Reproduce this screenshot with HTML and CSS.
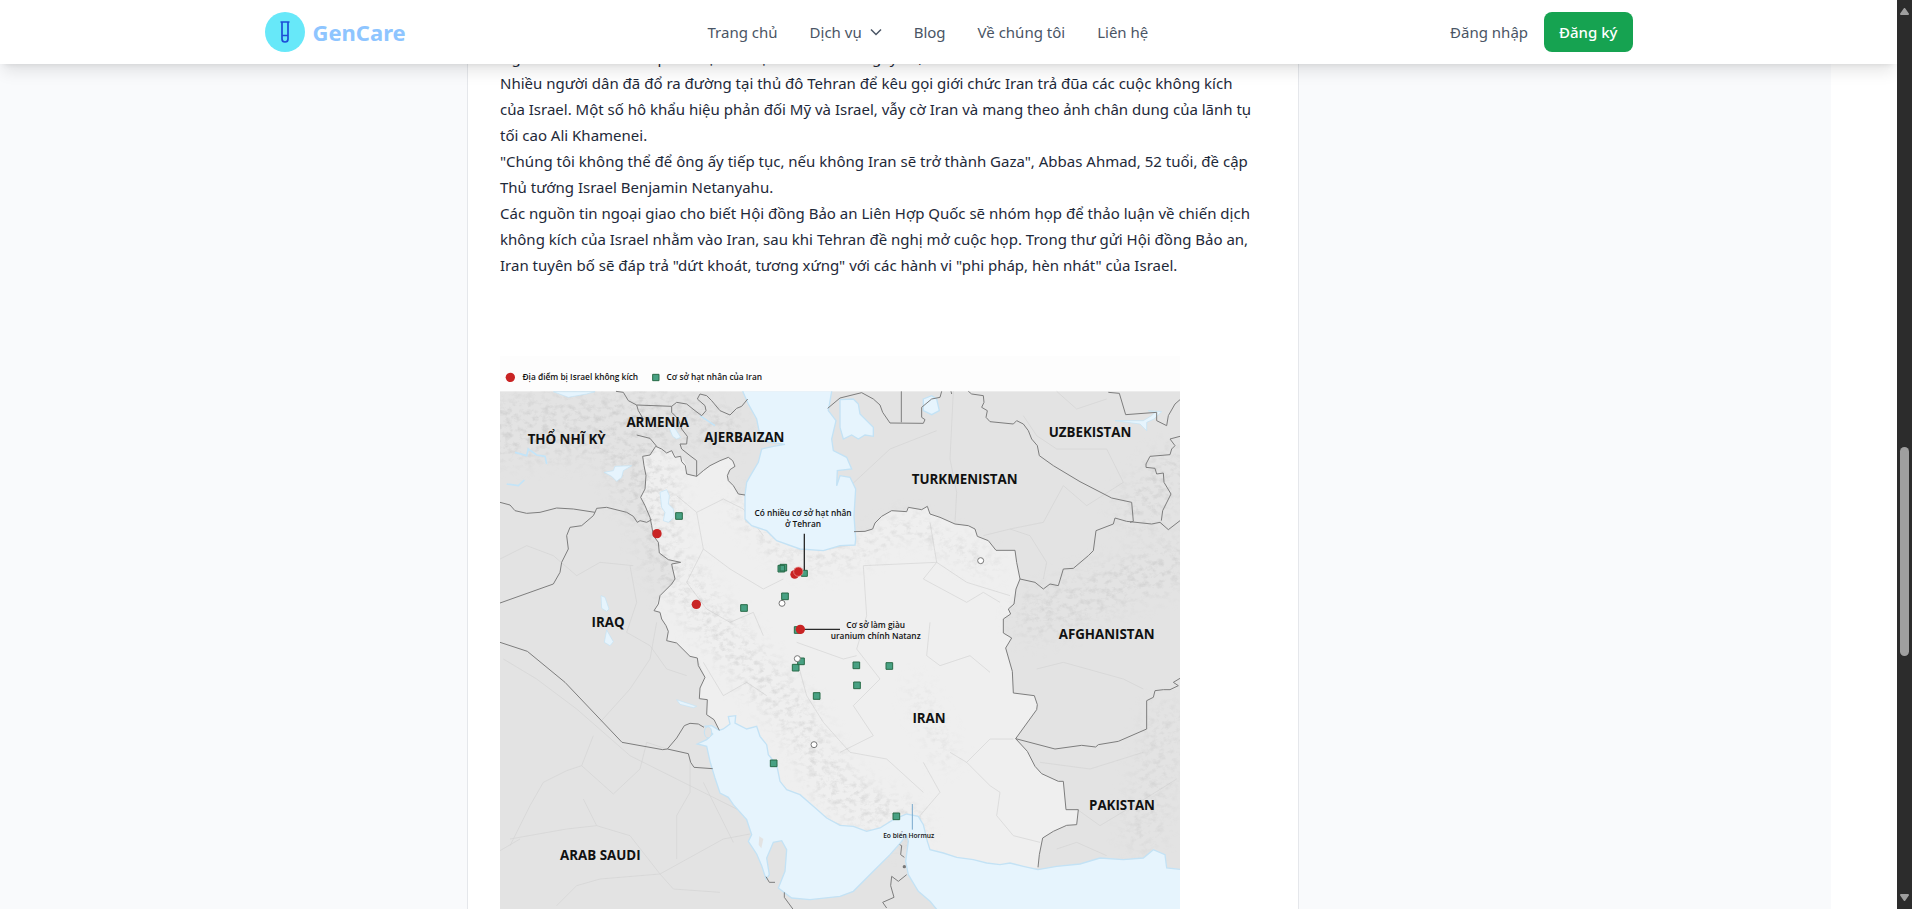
FILE: index.html
```html
<!DOCTYPE html>
<html lang="vi">
<head>
<meta charset="utf-8">
<meta name="viewport" content="width=device-width, initial-scale=1">
<title>GenCare - Blog</title>
<link rel="stylesheet" href="styles.css">
</head>
<body>
<div class="viewport">
  <div class="page">
    <header class="header">
      <div class="header-inner">
        <a class="brand" href="#">
          <span class="brand-mark">
            <svg width="24" height="24" viewBox="0 0 24 24" aria-hidden="true">
              <path d="M7.500 2h9M9 2v17a3 3 0 0 0 6 0V2M9 15.500h6" fill="none" stroke="#1d4ed8" stroke-width="1.700"/>
            </svg>
          </span>
          <span class="brand-name">GenCare</span>
        </a>
        <nav class="nav">
          <a href="#">Trang chủ</a>
          <button class="nav-menu" type="button">Dịch vụ
            <svg width="12" height="12" viewBox="0 0 12 12" aria-hidden="true"><path d="M1 3.500l5 5 5-5" fill="none" stroke="currentColor" stroke-width="1.500"/></svg>
          </button>
          <a href="#">Blog</a>
          <a href="#">Về chúng tôi</a>
          <a href="#">Liên hệ</a>
        </nav>
        <div class="account">
          <a href="#">Đăng nhập</a>
          <button class="register" type="button">Đăng ký</button>
        </div>
      </div>
    </header>

    <main class="main">
      <article class="article">
        <p>Người dân Iran xót xa phẫn nộ sau trận chiến lớn ở ngày 13,</p>
        <p>Nhiều người dân đã đổ ra đường tại thủ đô Tehran để kêu gọi giới chức Iran trả đũa các cuộc không kích của Israel. Một số hô khẩu hiệu phản đối Mỹ và Israel, vẫy cờ Iran và mang theo ảnh chân dung của lãnh tụ tối cao Ali Khamenei.</p>
        <p>"Chúng tôi không thể để ông ấy tiếp tục, nếu không Iran sẽ trở thành Gaza", Abbas Ahmad, 52 tuổi, đề cập Thủ tướng Israel Benjamin Netanyahu.</p>
        <p>Các nguồn tin ngoại giao cho biết Hội đồng Bảo an Liên Hợp Quốc sẽ nhóm họp để thảo luận về chiến dịch không kích của Israel nhằm vào Iran, sau khi Tehran đề nghị mở cuộc họp. Trong thư gửi Hội đồng Bảo an, Iran tuyên bố sẽ đáp trả "dứt khoát, tương xứng" với các hành vi "phi pháp, hèn nhát" của Israel.</p>

        <svg class="map" viewBox="30 21 2040 1680" role="img" aria-label="Bản đồ Iran">
          <defs>
            <filter id="relief" x="0" y="0" width="100%" height="100%">
              <feTurbulence type="fractalNoise" baseFrequency="0.045 0.060" numOctaves="5" seed="8"/>
              <feColorMatrix values="0 0 0 0 0.420  0 0 0 0 0.420  0 0 0 0 0.420  2.400 0 0 0 -1.100"/>
            </filter>
            <filter id="soft"><feGaussianBlur stdDeviation="30"/></filter>
            <mask id="ranges">
              <g filter="url(#soft)" fill="none" stroke="#fff" stroke-linecap="round">
                <path d="M30 240L400 230 470 420" stroke-width="190" opacity=".7"/>
                <path d="M460 180L700 240" stroke-width="120" opacity=".7"/>
                <path d="M500 400L520 620 700 860 900 1080 1040 1320 1240 1430" stroke-width="130" opacity=".7"/>
                <path d="M740 460L860 600 980 645 1100 620 1250 520 1500 650" stroke-width="46" opacity=".9"/>
                <path d="M1280 1020L1370 1230" stroke-width="50" opacity=".6"/>
                <path d="M1640 800L1900 700 2060 640M2040 370L1950 480" stroke-width="140" opacity=".65"/>
                <path d="M2030 1120L1960 1450" stroke-width="120" opacity=".5"/>
              </g>
            </mask>
          </defs>

          <rect x="30" y="21" width="2040" height="1680" fill="#fdfdfd"/>
          <rect x="30" y="127" width="2040" height="1574" fill="#e3e3e3"/>

          <path id="iran" fill="#efefef" d="M497 292L515 300 530 312 545 305 560 322 575 325 590 350 590 375 610 382 625 375 640 365 660 350 690 335 715 325 728 335 735 352 715 365 712 380 715 395 730 410 745 435 765 438 765 520 830 545 860 575 930 600 1000 605 1095 588 1092 548 1125 547 1148 540 1155 522 1175 502 1205 485 1250 488 1255 475 1295 482 1312 472 1320 495 1350 505 1395 525 1435 530 1455 540 1462 562 1495 575 1518 604 1575 604 1580 640 1590 690 1578 720 1572 765 1555 780 1562 795 1540 810 1540 852 1565 867 1547 897 1567 967 1570 1032 1633 1040 1642 1067 1640 1082 1577 1169 1612 1207 1635 1252 1655 1274 1705 1297 1720 1297 1728 1382 1765 1382 1760 1427 1730 1429 1690 1447 1658 1467 1648 1517 1644 1557 1500 1550 1310 1500 1250 1395 1130 1460 880 1350 800 1160 688 1144 672 1112 650 1097 652 1052 628 1049 630 1017 645 985 622 927 600 922 560 882 530 875 535 847 528 830 515 810 510 790 492 785 510 740 545 705 555 690 548 660 545 645 572 640 535 632 508 612 505 580 490 560 485 530 480 505 465 470 452 445 465 420 468 380 462 350 458 322 480 318Z"/>

          <g fill="none" stroke="#d3d3d3" stroke-width="2">
            <path d="M30 630L110 590 190 620 260 680 330 640 430 650M40 930L140 990 260 1080 420 1220 600 1310 760 1390M330 1120L420 1020 480 930 500 820M60 1490L120 1370 160 1300 230 1265 275 1250 310 1160M275 1250L370 1335 450 1260 470 1180 530 1200M60 1470L230 1440 320 1430 420 1460 510 1575 550 1620 690 1630M200 1670L260 1610 330 1590 510 1575 700 1470 780 1455M320 1430L280 1350M560 1530L560 1400 600 1330 600 1230M640 1300L690 1400 730 1480M30 1505L90 1470M420 650L440 760 410 850 480 890 530 960 590 980"/>
            <path d="M560 440L620 490 700 450 760 480 820 560M620 490L640 600 720 660 820 720 880 690M640 600L590 700 650 780 720 820 790 790 820 860M1390 127L1380 330 1400 430 1395 520M1060 430L1200 300 1340 245M1600 200L1640 260 1700 300 1850 300 1900 400 1790 470 1720 410 1660 520 1560 540 1480 560M1700 127L1760 180 1850 150M1560 540L1620 560 1670 640 1660 690M1320 520L1340 640 1300 690 1430 760 1480 730 1530 760M1120 650L1340 640 1430 700 1560 740M1120 650L1130 800 1100 900 1170 990 1090 1070 1150 1160 1050 1210M1320 820L1310 920 1350 950 1440 920 1500 970M1430 1240L1500 1170 1570 1170M1380 1210L1430 1240 1500 1310 1530 1330 1520 1400 1570 1460 1650 1480M1300 1240L1350 1330 1290 1400 1290 1440M920 880L1060 930 1100 920M920 930L950 1040 1000 1120 1080 1210 1190 1230 1300 1330M640 940L700 1040 770 1000 830 1040M1640 960L1720 940 1900 990 1960 1020M1650 1240L1800 1260 1960 1210M1760 1380L1830 1430 1980 1340 2060 1290M1700 1500L1760 1480 1850 1520"/>
          </g>
          <g mask="url(#ranges)"><rect x="30" y="127" width="2040" height="1574" filter="url(#relief)" opacity=".5"/></g>

          <g fill="#e6f4fd" stroke="#c3e2f5" stroke-width="4">
            <path stroke="none" d="M758 127L775 165 800 210 808 250 830 278 885 286 850 292 815 300 805 340 780 382 770 400 765 438 765 510 785 530 830 545 860 575 930 600 1000 605 1050 590 1095 588 1097 570 1092 500 1097 420 1080 385 1050 380 1040 410 1042 365 1085 360 1070 325 1030 305 1025 270 1038 215 1015 185 1025 127Z"/>
            <path fill="none" d="M758 127L775 165 800 210 808 250 830 278 885 286 850 292 815 300 805 340 780 382 770 400 765 438 765 510 785 530 830 545 860 575 930 600 1000 605 1050 590 1095 588 1097 570 1092 500 1097 420 1080 385 1050 380 1040 410 1042 365 1085 360 1070 325 1030 305 1025 270 1038 215 1015 185 1025 127"/>
            <path d="M1050 152L1090 150 1105 165 1110 195 1150 235 1150 262 1125 258 1105 270 1085 258 1060 270 1050 235Z"/>
            <path d="M1300 150L1325 140 1340 150 1348 185 1325 197 1300 185Z"/>
            <path d="M190 128L235 145 290 135 315 128ZM342 370L370 365 375 352 425 350 400 365 395 385 380 397 365 382ZM510 430L530 422 538 440 535 465 550 480 553 505 535 520 520 515 525 490 515 475ZM535 230L550 230 572 265 560 270 548 262ZM333 740L345 745 357 780 350 787 335 778ZM350 843L370 878 360 890 343 880ZM1875 215L1960 215 1985 200 1995 190 1975 185 2015 188 1992 210 1970 220 1970 245 1950 225ZM560 1052L620 1072 610 1076 570 1066Z" stroke-width="2"/>
            <path d="M688 1144L665 1130 645 1132 668 1155 650 1172 622 1185 650 1192 660 1237 675 1287 690 1332 715 1345 730 1367 770 1412 785 1457 775 1477 800 1515 815 1550 828 1590 838 1577 830 1527 850 1480 875 1475 890 1502 885 1567 865 1617 905 1647 960 1652 1050 1642 1090 1627 1150 1567 1200 1517 1235 1477 1250 1457 1255 1477 1247 1537 1255 1577 1285 1627 1320 1657 1360 1705 2080 1705 2080 1562 2030 1557 2025 1517 1990 1502 1960 1527 1900 1532 1830 1527 1770 1545 1700 1552 1644 1562 1600 1552 1560 1542 1530 1547 1490 1542 1450 1532 1400 1525 1360 1512 1320 1502 1312 1477 1300 1427 1285 1402 1250 1395 1210 1412 1170 1437 1130 1447 1090 1432 1050 1429 1010 1407 970 1372 930 1337 890 1322 870 1297 860 1247 835 1217 830 1187 810 1162 800 1132 770 1140 735 1122 737 1100 715 1103 720 1125 700 1140Z"/>
          </g>
          <path d="M75 310L110 320 115 300 140 318 165 322 170 345M50 405L85 410 103 393M630 200L675 230" fill="none" stroke="#c3e4f8" stroke-width="5"/>
          <ellipse cx="654" cy="1150" rx="11" ry="17" fill="#e3e3e3" stroke="#c3e2f5" stroke-width="3"/>
          <path d="M808 1462L820 1470 814 1498 806 1488Z" fill="#e3e3e3"/>

          <g fill="none" stroke="#7d7d7d" stroke-width="3" stroke-linejoin="round">
            <path d="M765 438L745 435 730 410 715 395 712 380 720 362 735 352 728 335 715 325 690 335 660 350 640 365 620 382 590 375 586 350 575 338 572 322 555 325 545 305 530 312 515 300 497 292 480 318 458 322 462 350 468 380 465 420 452 445 465 470 480 505 485 530 490 560 505 580 508 612 535 632 572 640 545 645 548 660 555 690 545 705 510 740 505 765 492 785 510 790 515 810 528 830 535 847 530 875 560 882 600 922 622 927 625 950 645 985 630 1017 628 1049 652 1052 650 1097 672 1112 688 1144"/>
            <path d="M1092 548L1125 547 1148 540 1155 522 1175 502 1205 485 1250 488 1255 475 1295 482 1312 472 1320 495 1350 505 1395 525 1435 530 1455 540 1462 562 1495 575 1518 604 1575 604 1580 640 1590 690 1578 720 1572 765 1555 780 1562 795 1540 810 1540 852 1565 867 1547 897 1567 967 1570 1032 1633 1040 1642 1067 1640 1082 1577 1169 1612 1207 1635 1252 1655 1274 1705 1297 1720 1297 1728 1382 1765 1382 1760 1427 1730 1429 1690 1447 1658 1467 1648 1517 1644 1555"/>
            <path d="M30 460L60 468 75 485 110 493 150 490 200 477 250 480 315 490 320 478 350 475 410 490 430 502 442 520 450 515 470 520 485 512M315 490L310 500 275 530 240 535 230 560 235 600 215 640 210 670 190 705 30 762"/>
            <path d="M378 127L400 130 415 155 440 168 445 185 460 210M440 168L545 172 560 160 590 165 615 185 635 200 648 185 645 170 622 150 630 135 650 140 665 155 690 185 720 198 740 178 755 172 773 150M545 172L545 190 565 210 575 240 592 262 590 285 570 285 575 300 600 320 620 335 620 382M440 258L480 268 500 292"/>
            <path d="M30 880L112 907 225 1000 396 1180 518 1202 532 1200 595 1214 602 1240 612 1255 668 1259M532 1200L560 1167 583 1130 600 1123 625 1125 642 1135M828 1583L838 1600 855 1600M883 1630L883 1645 910 1682"/>
            <path d="M1013 178L1050 147 1115 131 1150 150 1170 168 1178 190 1200 222 1300 223 1305 212 1295 205 1295 175 1325 150 1350 145 1355 127M1234 127V220M1383 127L1385 135M1435 127L1445 135 1480 140 1482 160 1475 175 1492 185 1488 205 1500 218 1570 225 1580 215 1600 225 1615 245 1625 270 1642 290 1648 320 1690 350 1770 398 1865 447 1925 460 1930 517 1920 520M1855 130L1888 133 1907 197 2000 190 2000 215 2030 230 2035 200 2055 165 2070 152M1590 690L1635 700 1660 720 1680 705 1705 710 1720 660 1750 658 1795 620 1810 605 1818 545 1870 525 1875 507 1910 517 1985 525 2010 520 2035 542 2070 515M2014 515L2018 485 2043 435 2022 400 2020 372 2000 375 1995 358 1968 355 1968 345 1980 322 2040 317 2045 300 2055 290 2040 270 2070 262"/>
            <path d="M1577 1169L1695 1200 1775 1189 1817 1194 1825 1187 1885 1177 1970 1140 1970 1055 1990 1045 1995 1025 2020 1022 2040 1022 2065 1010 2050 1000 2070 988M1229 1487L1235 1490 1232 1517 1243 1525M1250 1577L1225 1597 1205 1582 1202 1610 1212 1645 1178 1660 1190 1677"/>
          </g>

          <g stroke="#2b2b2b" stroke-width="4"><path d="M943 554V672M938 841H1050"/></g>
          <path d="M1267 1365V1442" stroke="#79a9cd" stroke-width="3"/>

          <g fill="#48a183" stroke="#286b48" stroke-width="3">
            <path d="M488 76h19v19h-19zM557 491h20v20h-20zM864 649h20v20h-20zM870 646h20v20h-20zM934 664h18v18h-18zM875 732h20v20h-20zM752 767h20v20h-20zM913 833h20v20h-20zM923 927h20v20h-20zM907 946h20v20h-20zM970 1031h20v20h-20zM1089 939h20v20h-20zM1188 941h20v20h-20zM1091 999h20v20h-20zM841 1233h20v20h-20zM1209 1392h20v20h-20z"/>
          </g>
          <g fill="#c92424">
            <circle cx="61" cy="85" r="14"/><circle cx="501" cy="554" r="14"/><circle cx="914" cy="676" r="13"/>
            <circle cx="619" cy="766" r="14"/><circle cx="931" cy="841" r="14"/>
          </g>
          <circle cx="925" cy="668" r="14" fill="#c92424" stroke="#f0a0a0" stroke-width="2"/>
          <g fill="#fff" stroke="#777" stroke-width="3">
            <circle cx="876" cy="763" r="9"/><circle cx="922" cy="929" r="9"/><circle cx="972" cy="1187" r="9"/><circle cx="1472" cy="635" r="9"/>
          </g>
          <circle cx="1243" cy="1553" r="5" fill="#777"/>

          <g class="map-country">
            <text x="230" y="286">THỔ NHĨ KỲ</text>
            <text x="503" y="234">ARMENIA</text>
            <text x="763" y="279">AJERBAIZAN</text>
            <text x="1424" y="405">TURKMENISTAN</text>
            <text x="1800" y="265">UZBEKISTAN</text>
            <text x="354" y="835">IRAQ</text>
            <text x="1850" y="870">AFGHANISTAN</text>
            <text x="1317" y="1123">IRAN</text>
            <text x="1896" y="1384">PAKISTAN</text>
            <text x="331" y="1533">ARAB SAUDI</text>
          </g>
          <g class="map-note">
            <text x="271" y="94">Địa điểm bị Israel không kích</text>
            <text x="673" y="94">Cơ sở hạt nhân của Iran</text>
            <text x="939" y="501">Có nhiều cơ sở hạt nhân</text>
            <text x="939" y="534">ở Tehran</text>
            <text x="1157" y="836">Cơ sở làm giàu</text>
            <text x="1157" y="869">uranium chính Natanz</text>
          </g>
          <text class="map-strait" x="1256" y="1466">Eo biển Hormuz</text>
        </svg>
      </article>
    </main>
  </div>

  <div class="scrollbar" aria-hidden="true">
    <svg width="9" height="7" viewBox="0 0 9 7"><path d="M4.500 1L8 6H1z" fill="#9f9f9f" stroke="#9f9f9f" stroke-width="2" stroke-linejoin="round"/></svg>
    <div class="track"><div class="thumb"></div></div>
    <svg width="9" height="7" viewBox="0 0 9 7"><path d="M4.500 6L8 1H1z" fill="#9f9f9f" stroke="#9f9f9f" stroke-width="2" stroke-linejoin="round"/></svg>
  </div>
</div>
</body>
</html>
```

FILE: styles.css
```css
* {
  box-sizing: border-box;
}

body {
  margin: 0;
  background: #fff;
  color: #1e2939;
  font-family: "Segoe UI", "Noto Sans", "Open Sans", sans-serif;
  font-size: 15px;
}

a {
  color: inherit;
  text-decoration: none;
}

button {
  border: 0;
  padding: 0;
  background: none;
  color: inherit;
  font: inherit;
  cursor: pointer;
}

.viewport {
  display: flex;
  height: 100vh;
  overflow: hidden;
}

.page {
  position: relative;
  flex: 1;
  min-width: 0;
  overflow: hidden;
}

.header {
  position: absolute;
  inset: 0 0 auto;
  z-index: 10;
  background: #fff;
  color: #4a5565;
  box-shadow: 0 10px 15px -3px rgba(0, 0, 0, 0.1), 0 4px 6px -4px rgba(0, 0, 0, 0.1);
}

.header-inner {
  display: flex;
  align-items: center;
  justify-content: space-between;
  max-width: 1368px;
  height: 64px;
  margin: 0 auto;
}

.brand {
  display: flex;
  align-items: center;
  gap: 8px;
}

.brand-mark {
  display: grid;
  place-items: center;
  width: 40px;
  height: 40px;
  border-radius: 50%;
  background: #67e8f9;
}

.brand-name {
  color: #8ec5ff;
  font-size: 22px;
  font-weight: 700;
}

.nav {
  display: flex;
  align-items: center;
  gap: 32px;
}

.nav-menu {
  display: flex;
  align-items: center;
  gap: 8px;
}

.account {
  display: flex;
  align-items: center;
  gap: 16px;
}

.register {
  height: 40px;
  padding: 0 15px;
  border-radius: 8px;
  background: #16a351;
  color: #fff;
  font-weight: 500;
}

.main {
  display: grid;
  grid-template-columns: 467fr minmax(0, 832px) 532fr;
  min-height: 100%;
  margin-right: 66px;
  background: #f9fafc;
}

.article {
  grid-column: 2;
  padding: 44px 32px 32px;
  border: solid #e5e7eb;
  border-width: 0 1px;
  background: #fff;
  line-height: 26px;
}

.article p {
  margin: 0;
  padding-right: 12px;
}

.map {
  display: block;
  width: 100%;
  max-width: 680px;
  margin-top: 78px;
}

.map-country,
.map-note,
.map-strait {
  fill: #111;
  font-family: "Open Sans", "Noto Sans", sans-serif;
  text-anchor: middle;
}

.map-country {
  font-size: 40px;
  font-weight: 700;
}

.map-note {
  font-size: 25px;
  font-weight: 600;
}

.map-strait {
  font-size: 20px;
  font-weight: 600;
}

.scrollbar {
  display: flex;
  flex-direction: column;
  align-items: center;
  width: 15px;
  padding: 8px 0;
  background: #2c2c2c;
}

.track {
  flex: 1;
  padding-top: 432px;
}

.thumb {
  width: 9px;
  height: 209px;
  border-radius: 5px;
  background: #9f9f9f;
}
```
